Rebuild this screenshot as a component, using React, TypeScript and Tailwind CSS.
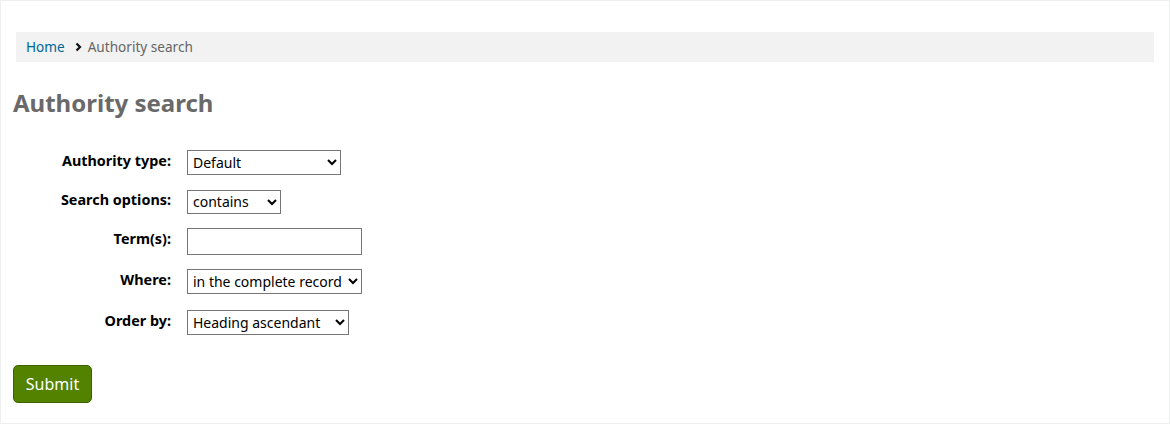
import React from "react";

const rows = [
  { label: "Authority type:", kind: "select", w: "w-[154px]", h: "h-[25px]", opts: ["Default"], rowH: "h-[39px]" },
  { label: "Search options:", kind: "select", w: "w-[94px]", h: "h-[24px]", opts: ["contains"], rowH: "h-[39px]" },
  { label: "Term(s):", kind: "input", w: "w-[175px]", h: "h-[27px]", opts: [], rowH: "h-[41px]" },
  { label: "Where:", kind: "select", w: "w-[175px]", h: "h-[25px]", opts: ["in the complete record"], rowH: "h-[41px]" },
  { label: "Order by:", kind: "select", w: "w-[162px]", h: "h-[25px]", opts: ["Heading ascendant"], rowH: "h-[25px]" },
];

export default function App() {
  return (
    <div
      className="w-[1170px] h-[424px] border border-[#eef0f0] bg-white text-black"
      style={{ fontFamily: '"Noto Sans", "Open Sans", sans-serif' }}
    >
      <div className="pt-[31px] px-[15px]">
        <nav className="h-[30px] bg-[#f2f2f2] flex items-center px-[10px] text-[13.6px]">
          <a href="#" className="text-[#006699]">Home</a>
          <svg className="ml-[10px] mr-[6px]" width="7" height="10" viewBox="0 0 7 10">
            <path d="M1.5 1.5 L5 5 L1.5 8.5" fill="none" stroke="#111" strokeWidth="2.2" />
          </svg>
          <span className="text-[#666666]">Authority search</span>
        </nav>
      </div>
      <h1 className="pl-[12px] mt-[25px] text-[24px] font-bold text-[#696969] leading-[32px]">
        Authority search
      </h1>
      <form className="mt-[31px] pl-[12px]" onSubmit={(e) => e.preventDefault()}>
        <div className="flex flex-col">
          {rows.map((r) => (
            <div key={r.label} className={`flex items-start ${r.rowH}`}>
              <label className="w-[158px] text-right text-[14.4px] font-bold leading-[20px] pt-[1px]">
                {r.label}
              </label>
              <div className="ml-[16px]">
                {r.kind === "select" ? (
                  <select className={`${r.w} ${r.h} border border-[#767676] text-[14px] pl-[1px] bg-white`}>
                    {r.opts.map((o) => (
                      <option key={o}>{o}</option>
                    ))}
                  </select>
                ) : (
                  <input type="text" className={`${r.w} ${r.h} border border-[#767676] bg-white text-[14px] px-[4px]`} />
                )}
              </div>
            </div>
          ))}
        </div>
        <button
          type="submit"
          className="mt-[30px] w-[79px] h-[38px] rounded-[5px] bg-[#538200] border border-[#3d6100] text-white text-[16px]"
        >
          Submit
        </button>
      </form>
    </div>
  );
}
